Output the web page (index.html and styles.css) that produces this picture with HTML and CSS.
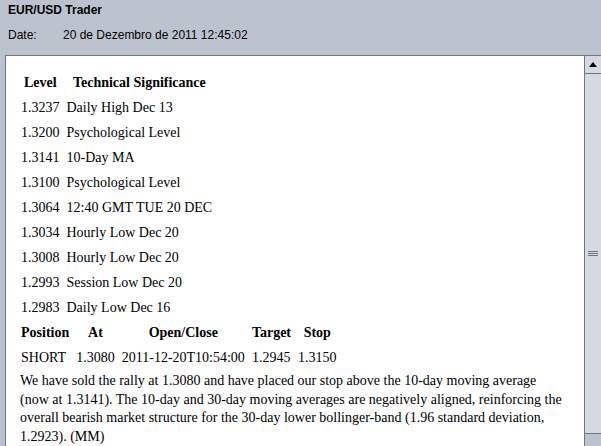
FILE: index.html
```html
<!DOCTYPE html>
<html>
<head>
<meta charset="utf-8">
<link rel="stylesheet" href="styles.css">
</head>
<body>
<div class="header">
  <div class="title">EUR/USD Trader</div>
  <div class="daterow"><span class="label">Date:</span><span>20 de Dezembro de 2011 12:45:02</span></div>
</div>
<div class="panel">
  <div class="content">
    <table class="levels">
      <tr><th>Level</th><th>Technical Significance</th></tr>
      <tr><td>1.3237</td><td>Daily High Dec 13</td></tr>
      <tr><td>1.3200</td><td>Psychological Level</td></tr>
      <tr><td>1.3141</td><td>10-Day MA</td></tr>
      <tr><td>1.3100</td><td>Psychological Level</td></tr>
      <tr><td>1.3064</td><td>12:40 GMT TUE 20 DEC</td></tr>
      <tr><td>1.3034</td><td>Hourly Low Dec 20</td></tr>
      <tr><td>1.3008</td><td>Hourly Low Dec 20</td></tr>
      <tr><td>1.2993</td><td>Session Low Dec 20</td></tr>
      <tr><td>1.2983</td><td>Daily Low Dec 16</td></tr>
    </table>
    <table class="levels">
      <tr><th>Position</th><th>At</th><th>Open/Close</th><th>Target</th><th>Stop</th></tr>
      <tr><td>SHORT</td><td>1.3080</td><td>2011-12-20T10:54:00</td><td>1.2945</td><td>1.3150</td></tr>
    </table>
    <p class="comment">We have sold the rally at 1.3080 and have placed our stop above the 10-day moving average (now at 1.3141). The 10-day and 30-day moving averages are negatively aligned, reinforcing the overall bearish market structure for the 30-day lower bollinger-band (1.96 standard deviation, 1.2923). (MM)</p>
  </div>
  <div class="scrollbar">
    <div class="up"><svg width="8" height="5" viewBox="0 0 8 5"><path d="M0 5 L4 0 L8 5 Z" fill="#000"/></svg></div>
    <div class="thumb"><div class="grip"><span></span><span></span><span></span></div></div>
    <div class="track"></div>
  </div>
</div>
</body>
</html>
```
FILE: styles.css
```css
html, body {
  margin: 0;
  padding: 0;
  background: #bdc3ce;
  overflow: hidden;
}
body {
  width: 601px;
  height: 446px;
  font-family: "Liberation Sans", Arial, sans-serif;
  font-size: 12px;
  color: #000;
}
.header {
  height: 55px;
  padding-left: 8px;
  box-sizing: border-box;
}
.title {
  font-weight: bold;
  line-height: 20px;
}
.daterow {
  line-height: 30px;
  display: flex;
}
.label {
  width: 55px;
}
.panel {
  margin-left: 5px;
  height: 391px;
  border-top: 1px solid #6f7583;
  border-left: 1px solid #6f7583;
  display: flex;
  box-sizing: border-box;
}
.content {
  flex: 1;
  min-width: 0;
  background: #fff;
  padding: 14px 17px 0 10px;
  font-family: "Liberation Serif", "Times New Roman", serif;
  font-size: 14px;
  overflow: hidden;
}
.levels {
  border-collapse: separate;
  border-spacing: 3px 0;
}
.levels th, .levels td {
  padding: 0 2px;
  line-height: 25px;
  height: 25px;
  white-space: nowrap;
}
.levels td {
  text-align: left;
}
.comment {
  margin: 2px 0 0 4px;
  line-height: 18.5px;
}
.scrollbar {
  width: 16px;
  border-left: 1px solid #6f7583;
  display: flex;
  flex-direction: column;
  background: #bdc3ce;
}
.up {
  height: 17px;
  background: #d6d9e2;
  border-bottom: 1px solid #6f7583;
  display: flex;
  align-items: center;
  justify-content: center;
}
.thumb {
  height: 359px;
  background: #d6d9e2;
  border-bottom: 1px solid #6f7583;
  display: flex;
  align-items: center;
  justify-content: center;
}
.grip {
  display: flex;
  flex-direction: column;
  gap: 1px;
}
.grip span {
  display: block;
  width: 10px;
  height: 1px;
  background: #6f7583;
}
.track {
  flex: 1;
}
```
